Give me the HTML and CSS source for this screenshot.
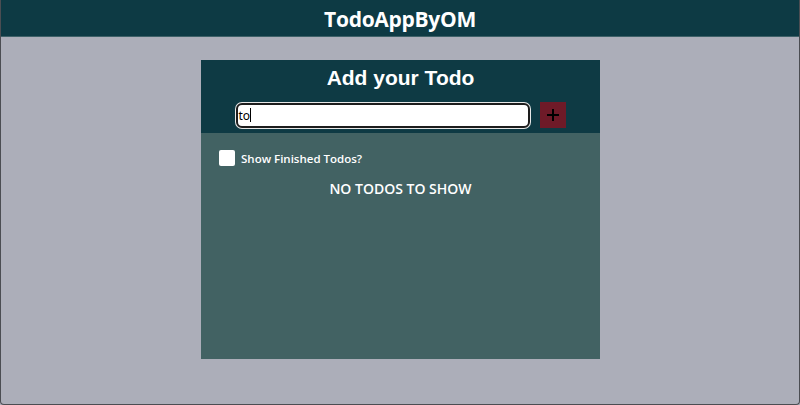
FILE: index.html
```html
<!DOCTYPE html>
<html>
<head>
<meta charset="utf-8">
<link rel="stylesheet" href="styles.css">
</head>
<body>
<div class="window">
  <header class="topbar">TodoAppByOM</header>
  <main class="main">
    <section class="card">
      <div class="card-top">
        <h1 class="card-title">Add your Todo</h1>
        <div class="add-row">
          <div class="todo-input"><span class="typed">to</span><span class="caret"></span></div>
          <button class="add-btn" aria-label="Add"><svg width="12" height="12" viewBox="0 0 12 12"><path d="M6 0V12M0 6H12" stroke="#000" stroke-width="2"/></svg></button>
        </div>
      </div>
      <div class="card-body">
        <label class="finished"><span class="check"></span>Show Finished Todos?</label>
        <p class="empty">NO TODOS TO SHOW</p>
      </div>
    </section>
  </main>
</div>
</body>
</html>
```
FILE: styles.css
```css
* { box-sizing: border-box; }
html, body { margin: 0; padding: 0; }
body { width: 800px; height: 405px; overflow: hidden; background: #acaeb9; font-family: "Open Sans", "Noto Sans", sans-serif; }
.window {
  height: 405px;
  display: flex;
  flex-direction: column;
  border: 1px solid #4b4d52;
  border-top: none;
  border-radius: 0 0 4px 4px;
  background: #acaeb9;
}
.topbar {
  height: 37px;
  background: #0d3a44;
  border-bottom: 1px solid #3e6168;
  color: #fff;
  font-weight: 700;
  font-size: 21px;
  letter-spacing: -0.3px;
  display: flex;
  align-items: center;
  justify-content: center;
  padding-top: 1px;
}
.main { flex: 1; display: flex; justify-content: center; padding-top: 23px; padding-left: 1px; }
.card { width: 399px; height: 299px; display: flex; flex-direction: column; background: #426263; }
.card-top { height: 73px; background: #0e3a44; display: flex; flex-direction: column; align-items: center; }
.card-title {
  margin: 5px 0 0;
  color: #fff;
  font-family: "Liberation Sans", Arial, sans-serif;
  font-weight: 700;
  font-size: 21px;
  line-height: 26px;
}
.add-row { display: flex; align-items: center; gap: 10px; margin-top: 11px; }
.todo-input {
  width: 294px;
  height: 25px;
  background: #fff;
  border: 2px solid #1d1d1d;
  box-shadow: 0 0 0 1px #e8e8e8;
  border-radius: 6px;
  display: flex;
  align-items: center;
  padding-left: 1px;
  font-family: "Noto Sans", sans-serif;
  font-size: 12px;
  color: #000;
}
.caret { width: 1px; height: 14px; background: #000; }
.add-btn {
  width: 26px;
  height: 26px;
  border: none;
  padding: 0;
  background: #6e1a28;
  display: flex;
  align-items: center;
  justify-content: center;
}
.add-btn svg { display: block; }
.card-body { padding: 17px 18px 0; display: flex; flex-direction: column; }
.finished { display: flex; align-items: center; gap: 6px; color: #fff; font-size: 11.5px; font-weight: 600; }
.check { width: 16px; height: 16px; background: #fff; border-radius: 2px; }
.empty { margin: 13px 0 0; text-align: center; color: #fff; font-size: 14px; font-weight: 600; }
```
